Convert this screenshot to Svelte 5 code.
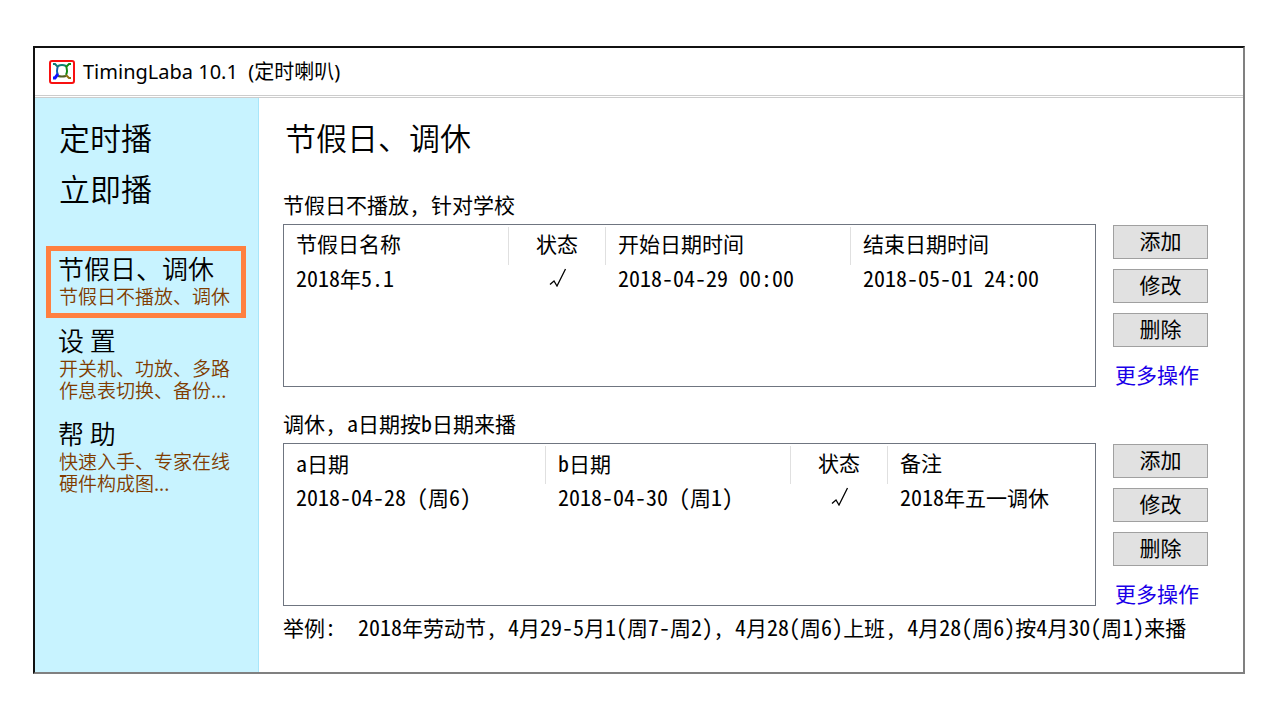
<script>
    let mainLinks = ['定时播', '立即播']

    let subLinks = [
        { title: '节假日、调休', lines: ['节假日不播放、调休'] },
        { title: '设 置', lines: ['开关机、功放、多路', '作息表切换、备份...'] },
        { title: '帮 助', lines: ['快速入手、专家在线', '硬件构成图...'] }
    ]

    let active = 0

    let groups = [
        {
            label: '节假日不播放, 针对学校',
            cols: [
                { name: '节假日名称', width: 225 },
                { name: '状态', width: 97, check: true },
                { name: '开始日期时间', width: 245 },
                { name: '结束日期时间' }
            ],
            rows: [['2018年5.1', true, '2018-04-29 00:00', '2018-05-01 24:00']]
        },
        {
            label: '调休, a日期按b日期来播',
            cols: [
                { name: 'a日期', width: 262 },
                { name: 'b日期', width: 245 },
                { name: '状态', width: 97, check: true },
                { name: '备注' }
            ],
            rows: [['2018-04-28 (周6)', '2018-04-30 (周1)', true, '2018年五一调休']]
        }
    ]

    let buttons = ['添加', '修改', '删除']

    let example = '举例:  2018年劳动节, 4月29-5月1(周7-周2), 4月28(周6)上班, 4月28(周6)按4月30(周1)来播'

    // latin runs get their own half-width style
    function runs(text) {
        return text.match(/[ -~]+|[^ -~]+/g).map((t) => ({ t, latin: /^[ -~]/.test(t) }))
    }
</script>

{#snippet mixed(text)}{#each runs(text) as run}{#if run.latin}<span class="latin">{run.t}</span>{:else}{run.t}{/if}{/each}{/snippet}

<div class="window">
    <header>
        <svg class="logo" width="26" height="24" viewBox="0 0 26 24" fill="none">
            <rect x="1" y="1" width="24" height="22" rx="2" fill="#fff" stroke="#f81010" stroke-width="2" />
            <path d="M9 6Q13 4 17 6" stroke="#108070" stroke-width="2" />
            <path d="M17 6Q19 11 17 15" stroke="#148a14" stroke-width="2" />
            <path d="M9 6Q7 11 9 15" stroke="#1060b0" stroke-width="2" />
            <path d="M9 16Q13 17 17 16" stroke="#506020" stroke-width="2" />
            <path d="M4 4H6L9 7" stroke="#107878" stroke-width="2" />
            <path d="M22 4H20L17 7" stroke="#148a14" stroke-width="2" />
            <path d="M4 18H6L9 14" stroke="#1010ff" stroke-width="3" />
            <path d="M17 15L20 18H22" stroke="#907010" stroke-width="2" />
        </svg>
        <span class="caption">TimingLaba 10.1&nbsp; (定时喇叭)</span>
    </header>

    <div class="body">
        <nav>
            <div class="mainLinks">
                {#each mainLinks as link}
                    <a href="#top">{link}</a>
                {/each}
            </div>
            {#each subLinks as link, i}
                <a class="sub" class:active={active === i} href="#top" on:click|preventDefault={() => (active = i)}>
                    <span class="subTitle">{link.title}</span>
                    {#each link.lines as line}
                        <span class="subLine">{line}</span>
                    {/each}
                </a>
            {/each}
        </nav>

        <main>
            <h1>节假日、调休</h1>

            {#each groups as group}
                <section>
                    <h2>{@render mixed(group.label)}</h2>
                    <div class="row">
                        <div class="list">
                            <table>
                                <colgroup>
                                    {#each group.cols as col}
                                        <col style={col.width ? `width: ${col.width}px` : ''} />
                                    {/each}
                                </colgroup>
                                <thead>
                                    <tr>
                                        {#each group.cols as col}
                                            <th class:center={col.check}>{@render mixed(col.name)}</th>
                                        {/each}
                                    </tr>
                                </thead>
                                <tbody>
                                    {#each group.rows as row}
                                        <tr>
                                            {#each row as cell, i}
                                                {#if group.cols[i].check}
                                                    <td class="center">
                                                        {#if cell}
                                                            <svg class="check" width="18" height="19" viewBox="0 0 18 19" role="img" aria-label="√">
                                                                <path d="M1 16.5L5 13L8 18L16.5 1" fill="none" stroke="#000" stroke-width="1.3" />
                                                            </svg>
                                                        {/if}
                                                    </td>
                                                {:else}
                                                    <td>{@render mixed(cell)}</td>
                                                {/if}
                                            {/each}
                                        </tr>
                                    {/each}
                                </tbody>
                            </table>
                        </div>
                        <div class="actions">
                            {#each buttons as name}
                                <button>{name}</button>
                            {/each}
                            <a href="#more">更多操作</a>
                        </div>
                    </div>
                </section>
            {/each}

            <p class="example">{@render mixed(example)}</p>
        </main>
    </div>
</div>

<style>
    :global(body) {
        background: #fff;
    }

    .window {
        margin: 46px 35px 46px 33px;
        border: 2px solid #111;
        border-right-color: #808080;
        border-bottom-color: #808080;
        font-family: "Noto Sans CJK SC", sans-serif;
        font-size: 21px;
        color: #000;
    }

    header {
        display: flex;
        align-items: center;
        gap: 8px;
        height: 47px;
        padding-left: 14px;
        border-bottom: 3px double #ccc;
    }

    .caption {
        font-family: "Noto Sans", "Noto Sans CJK SC", sans-serif;
        font-size: 20px;
        line-height: 28px;
    }

    .body {
        display: flex;
    }

    nav {
        box-sizing: border-box;
        flex: none;
        width: 224px;
        padding: 13px 12px 0 11px;
        background: #c8f3ff;
        border-right: 1px solid #a8e6fa;
    }

    nav a {
        display: block;
        color: #000;
        text-decoration: none;
        white-space: nowrap;
    }

    .mainLinks {
        padding-left: 13px;
        margin-bottom: 33px;
        font-size: 31px;
        font-weight: 350;
        line-height: 51px;
    }

    .sub {
        padding: 0 0 5px 7px;
        border: 5px solid transparent;
    }

    .active {
        padding-bottom: 6px;
        border-color: #ff8040;
    }

    .subTitle {
        display: block;
        font-size: 26px;
        font-weight: 350;
        line-height: 34px;
    }

    .subLine {
        display: block;
        padding-left: 1px;
        font-size: 19px;
        font-weight: 350;
        line-height: 22px;
        color: #803c00;
    }

    main {
        flex: 1;
        min-width: 0;
        padding: 14px 35px 28px 24px;
    }

    h1 {
        margin: 0 0 27px 2px;
        font-size: 31px;
        font-weight: 350;
        line-height: 50px;
    }

    h2 {
        margin: 0;
        padding-bottom: 6px;
        font-size: 21px;
        font-weight: 400;
        line-height: 28px;
        white-space: pre;
    }

    section {
        margin-bottom: 17px;
    }

    .row {
        display: flex;
        align-items: flex-start;
        gap: 17px;
    }

    .list {
        box-sizing: border-box;
        flex: 1;
        min-height: 163px;
        padding-top: 2px;
        border: 1px solid #6f7580;
    }

    table {
        width: 100%;
        table-layout: fixed;
        border-collapse: separate;
        border-spacing: 0;
    }

    th,
    td {
        padding: 0 0 0 12px;
        font-weight: 400;
        line-height: 28px;
        text-align: left;
        white-space: pre;
    }

    th {
        box-sizing: border-box;
        height: 38px;
        padding-bottom: 6px;
        border-right: 1px solid #e0e0e0;
    }

    td {
        line-height: 24px;
    }

    th:last-child {
        border-right: none;
    }

    th.center,
    td.center {
        padding-left: 0;
        text-align: center;
        white-space: normal;
    }

    .check {
        display: block;
        margin: 0 auto;
    }

    .latin {
        font-size: 22px;
        font-feature-settings: "hwid";
    }

    .actions {
        display: flex;
        flex-direction: column;
        gap: 10px;
        width: 95px;
        padding-top: 1px;
    }

    button {
        height: 34px;
        padding: 0 0 4px;
        border: 1px solid #a0a0a0;
        background: #e1e1e1;
        font-family: inherit;
        font-size: 21px;
        line-height: 28px;
        color: #000;
    }

    .actions a {
        padding-left: 2px;
        line-height: 34px;
        color: #1a00e8;
        text-decoration: none;
    }

    .example {
        margin: -18px 0 0;
        line-height: 34px;
        white-space: pre;
    }
</style>
